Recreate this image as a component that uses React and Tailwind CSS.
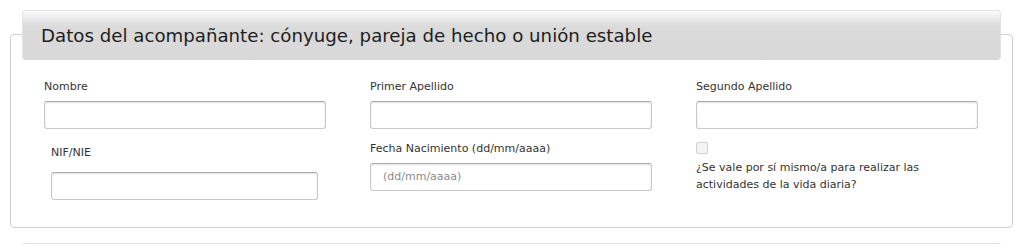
import React from "react";

const font = { fontFamily: '"DejaVu Sans", Verdana, sans-serif' };

function Input({ className = "", placeholder }) {
  return (
    <div
      className={
        "h-[28px] rounded-[3px] border border-[#c8c8c8] border-t-[#a9a9a9] bg-white shadow-[inset_0_1px_2px_rgba(0,0,0,0.12)] flex items-center px-[12px] text-[11px] text-[#8a8a8a] " +
        className
      }
    >
      {placeholder}
    </div>
  );
}

export default function App() {
  return (
    <div className="w-[1024px] bg-white pt-[10px] text-[#333]" style={font}>
      <div className="relative z-10 mx-[22px] h-[50px] w-[979px] rounded-[4px] border border-[#e2e2e2] border-b-0 bg-[linear-gradient(to_bottom,#fbfbfb_0px,#dadada_16px,#d9d9d9_100%)] pl-[18px] flex items-center">
        <span className="text-[18.2px] leading-[24px] text-[#1e1e1e] pt-[1px]">
          Datos del acompañante: cónyuge, pareja de hecho o unión estable
        </span>
      </div>
      <div className="ml-[10px] mt-[-26px] w-[1003px] rounded-[4px] border border-[#cfcfcf] pl-[33px] pt-[45px] pb-[27px]">
        <div className="grid grid-cols-[282px_282px_282px] gap-x-[44px]">
          <div>
            <div className="text-[11px] leading-[14px]">Nombre</div>
            <Input className="mt-[7px]" />
          </div>
          <div>
            <div className="text-[11px] leading-[14px]">Primer Apellido</div>
            <Input className="mt-[7px]" />
          </div>
          <div>
            <div className="text-[11px] leading-[14px]">Segundo Apellido</div>
            <Input className="mt-[7px]" />
          </div>
        </div>
        <div className="mt-[12px] grid grid-cols-[282px_282px_282px] gap-x-[44px]">
          <div className="pl-[7px] pt-[5px]">
            <div className="text-[11px] leading-[14px]">NIF/NIE</div>
            <Input className="mt-[12px] w-[267px]" />
          </div>
          <div className="pt-[1px]">
            <div className="text-[11px] leading-[14px]">Fecha Nacimiento (dd/mm/aaaa)</div>
            <Input className="mt-[7px]" placeholder="(dd/mm/aaaa)" />
          </div>
          <div className="pt-[1px]">
            <div className="h-[12px] w-[12px] rounded-[2px] border border-[#d0d0d0] bg-[#f4f4f4]" />
            <div className="mt-[5px] text-[11px] leading-[17px]">
              ¿Se vale por sí mismo/a para realizar las
              <br />
              actividades de la vida diaria?
            </div>
          </div>
        </div>
      </div>
      <div className="mx-[22px] mt-[15px] h-[40px] w-[979px] rounded-t-[4px] border border-b-0 border-[#e0e0e0]" />
    </div>
  );
}
